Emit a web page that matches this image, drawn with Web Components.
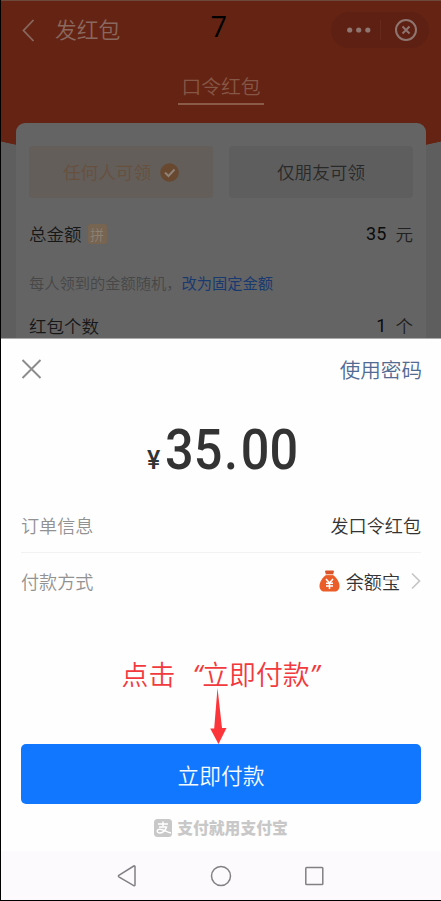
<!DOCTYPE html>
<html lang="zh-CN">
<head>
<meta charset="utf-8">
<title>发红包</title>
<style>
body{margin:0;background:#000;font-family:"Noto Sans CJK SC",sans-serif;font-weight:350;}
</style>
</head>
<body>
<pay-screen></pay-screen>
<script>
function define(name, html){
  const t=document.createElement('template');
  t.innerHTML=html;
  customElements.define(name,class extends HTMLElement{
    constructor(){super();this.attachShadow({mode:'open'}).appendChild(t.content.cloneNode(true));}
  });
}

define('nav-header',`
<style>
:host{display:block;height:122px;color:#89685f}
.bar{display:flex;align-items:center;height:58px;padding:0 12px 0 20px;box-sizing:border-box}
.title{font-size:21.8px;line-height:56px;height:58px;margin-left:20px;flex:1}
.capsule{display:flex;width:98px;height:36px;border-radius:18px;background:#5d2013}
.tab{display:block;width:86px;height:32px;margin:12px 0 0 177px;border-bottom:2px solid #8a5b49;box-sizing:content-box;text-align:center;font-size:19.8px;line-height:29px;color:#855747;white-space:nowrap}
svg{display:block}
</style>
<div class="bar">
<svg width="14" height="24" viewBox="0 0 14 24" fill="none" stroke="#89685f" stroke-width="1.8"><path d="M12.500 2 2.500 12.500 12.500 23"/></svg>
<span class="title"><slot></slot></span>
<span class="capsule"><svg width="98" height="36" viewBox="0 0 98 36"><g fill="#8f756f"><circle cx="18.700" cy="18" r="2.600"/><circle cx="27.700" cy="18" r="2.600"/><circle cx="36.800" cy="18" r="2.600"/></g><path d="M49.500 8v20" stroke="#652a1b"/><circle cx="75" cy="18" r="10" fill="none" stroke="#8f756f" stroke-width="2"/><path d="m71.500 14.500 7 7m0-7-7 7" stroke="#8f756f" stroke-width="2"/></svg></span>
</div>
<span class="tab"><slot name="tab"></slot></span>`);

define('choice-chip',`
<style>
:host{display:flex;flex:1;height:52px;align-items:center;justify-content:center;gap:9px;font-size:17.6px;line-height:52px;border-radius:4px;background:#5e5e5e;color:#292929}
:host([selected]){background:#635e59;color:#67503e}
</style><span><slot></slot></span><slot name="icon"></slot>`);

define('form-line',`
<style>
:host{display:flex;align-items:center;justify-content:space-between;font-size:17.5px;line-height:26px;color:#171717}
.l{display:flex;align-items:center;gap:6px}
.r{display:flex;gap:9px;color:#202020}
.v{font-size:18px;color:#0b0b0b;font-family:Roboto,sans-serif;font-weight:400;letter-spacing:.1px}
</style><span class="l"><slot></slot></span><span class="r"><span class="v"><slot name="value"></slot></span><slot name="unit"></slot></span>`);

define('packet-card',`
<style>
:host{display:block;width:410px;height:216px;margin-left:15px;border-radius:9px 9px 0 0;background:#646464;padding:23px 13px 0;box-sizing:border-box}
.chips{display:flex;gap:16px}
svg{display:block}
.badge{width:19px;height:20px;border-radius:2px;background:#776451;color:#8b8175;font-size:14px;line-height:20px;text-align:center}
.hint{font-size:15.250px;line-height:24px;height:24px;margin:23px 0 19px;color:#474747;white-space:nowrap}
.hint b{font-weight:400;color:#183a70}
form-line.first{margin-top:23px}
</style>
<div class="chips">
<choice-chip selected>任何人可领<svg slot="icon" width="19" height="19" viewBox="0 0 19 19"><circle cx="9.500" cy="9.500" r="9.300" fill="#68482f"/><path d="m5 9.500 3.500 3.500 6-6.500" fill="none" stroke="#8d8178" stroke-width="2"/></svg></choice-chip>
<choice-chip>仅朋友可领</choice-chip>
</div>
<form-line class="first">总金额<span class="badge">拼</span><span slot="value">35</span><span slot="unit">元</span></form-line>
<div class="hint">每人领到的金额随机，<b>改为固定金额</b></div>
<form-line>红包个数<span slot="value">1</span><span slot="unit">个</span></form-line>`);

define('order-row',`
<style>
:host{display:flex;align-items:center;justify-content:space-between;height:55px;box-sizing:border-box;font-size:18.1px;line-height:26px;color:#333}
.l{color:#929292}
.r{display:flex;align-items:center}
</style><span class="l"><slot name="label"></slot></span><span class="r"><slot></slot></span>`);

define('pay-sheet',`
<style>
:host{display:flex;flex-direction:column;height:513px;background:#fefefe;padding:0 20px 0 20px;border-top:1px solid #aaa;box-sizing:border-box}
svg{display:block}
.top{display:flex;justify-content:space-between;align-items:center;height:61px;margin-right:-1px;color:#526b93;font-size:20.600px}
.amount{display:flex;justify-content:center;align-items:baseline;height:100px;line-height:104px;color:#333;font-family:Roboto,sans-serif;font-weight:500}
.yen{font-size:25px;width:18px}
.num{font-size:56px;width:130px;white-space:nowrap}
.num span{display:inline-block;transform:scaleX(.9);transform-origin:0 50%}
.num i{font-style:normal;padding:0 3px 0 2px}
.sep{height:1px;background:#f2f2f2}
.method{height:57px}
.bag{margin-right:6px}.chev{margin-left:11px}
.btn{margin-top:136px;height:60px;flex:none;border-radius:5px;background:#1177fe;color:#f4faff;font-size:21.8px;line-height:62px;text-align:center}
.brand{display:flex;justify-content:center;align-items:center;gap:5px;height:48px;color:#c8c8c8;font-size:15.8px;font-weight:900}
</style>
<div class="top"><svg width="22" height="22" viewBox="0 0 22 22" stroke="#8c8c8c" stroke-width="1.900"><path d="m1.500 2 18 18m0-18-18 18"/></svg><span>使用密码</span></div>
<div class="amount"><span class="yen">¥</span><span class="num"><span>35<i>.</i>00</span></span></div>
<order-row><span slot="label">订单信息</span>发口令红包</order-row>
<div class="sep"></div>
<order-row class="method"><span slot="label">付款方式</span><svg class="bag" width="21" height="22" viewBox="0 0 21 22"><path d="M6 1.500Q6 .5 7 .5h7q1 0 1 1l-1 3H7z" fill="#d9542a"/><path d="M7 5h7c3.500 2.500 6.500 7 6.500 11 0 3.500-2 5.500-5 5.500h-10c-3 0-5-2-5-5.500C.5 12 3.500 7.500 7 5z" fill="#ea5c28"/><path d="M6.500 4.700h8" stroke="#f7c7b0"/><path d="m7 9 3.500 4L14 9M7 13.200h7M7 16h7M10.500 13v6" fill="none" stroke="#fff" stroke-width="1.500"/></svg>余额宝<svg class="chev" width="10" height="18" viewBox="0 0 10 18" fill="none" stroke="#c6c6c6" stroke-width="1.700"><path d="m1 1.500 7.500 7.500L1 16.500"/></svg></order-row>
<div class="btn">立即付款</div>
<div class="brand"><svg width="18" height="18" viewBox="0 0 18 18"><rect width="18" height="18" rx="3.500" fill="#c8c8c8"/><path d="M4 5h10M9 2.500V8M5 8h7.500c-.8 3-3.500 6-6.500 6-3.500 0-3.700-3.500-.5-3.700C8.500 10 12 12.500 17 14" fill="none" stroke="#fff" stroke-width="1.400"/></svg><span>支付就用支付宝</span></div>`);

define('system-nav',`
<style>
:host{display:flex;height:49px;background:#fcfafd;align-items:center}
svg{display:block}
</style>
<svg width="440" height="49" viewBox="0 0 440 49" fill="none" stroke="#828084" stroke-width="1.500" stroke-linejoin="round"><path d="M134 15.500v18.500a.8.8 0 0 1-1.200.7l-15-8.900a.9.9 0 0 1 0-1.500l15-9.300a.8.8 0 0 1 1.200.5z"/><circle cx="220" cy="25" r="9.500"/><rect x="304.800" y="16.500" width="17" height="17" rx=".8"/></svg>`);

define('pay-screen',`
<style>
:host{display:block;position:relative;width:440px;height:900px;margin-left:1px;overflow:hidden;background:#5e5e5e;border-bottom:1px solid #000}
.page{height:338px;box-sizing:border-box;border-top:1px solid #6b4a3c;background:radial-gradient(ellipse 430px 164px at 50% 0,#652413 99.600%,transparent 100%)}
.step,.tip,.arrow{position:absolute}
.step{left:209.500px;top:5px;font:29px/42px "Open Sans",sans-serif;color:#000}
.tip{left:120.500px;top:654px;font-size:26.900px;line-height:40px;color:#f23a3e;white-space:nowrap}
.q{display:inline-block;width:1em;font-family:"Open Sans",sans-serif;font-style:italic;font-weight:400}
.open{text-align:right}
.arrow{left:208px;top:688px;display:block}
</style>
<div class="page"><nav-header>发红包<span slot="tab">口令红包</span></nav-header><packet-card></packet-card></div>
<pay-sheet></pay-sheet>
<system-nav></system-nav>
<span class="step">7</span>
<span class="tip">点击<span class="q open">“</span>立即付款<span class="q">”</span></span>
<svg class="arrow" width="18" height="56" viewBox="0 0 18 56"><path d="M8.500 0 13 40h4.500L9.500 56 1.200 40.500h4z" fill="#fb3539"/></svg>`);
</script>
</body>
</html>
